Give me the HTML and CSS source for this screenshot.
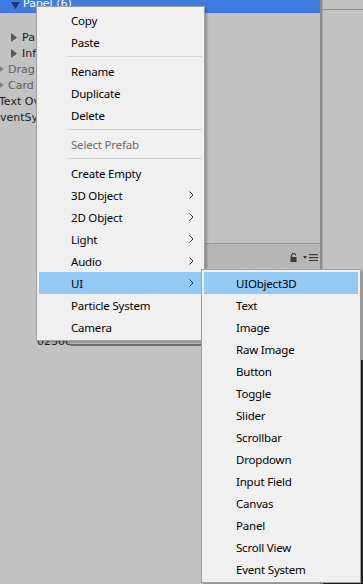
FILE: index.html
```html
<!DOCTYPE html>
<html>

<head>
  <title>Hierarchy context menu</title>
  <link rel="stylesheet" href="styles.css">
</head>

<body>
  <div class="editor">
    <div class="left">
      <div class="hierarchy">
        <div class="tree">
          <div class="row selected">
            <svg class="fold" width="9" height="7" viewBox="0 0 9 7"><polygon points="0,0 9,0 4.5,7" /></svg>
            <span>Panel (6)</span>
          </div>
          <div class="row"></div>
          <div class="row lvl-a">
            <svg class="arrow" width="6" height="9" viewBox="0 0 6 9"><polygon points="0,0 6,4.5 0,9" /></svg>
            <span>Panel</span>
          </div>
          <div class="row lvl-a">
            <svg class="arrow" width="6" height="9" viewBox="0 0 6 9"><polygon points="0,0 6,4.5 0,9" /></svg>
            <span>InfoPanel</span>
          </div>
          <div class="row lvl-b muted">
            <svg class="arrow" width="6" height="8" viewBox="0 0 6 8"><polygon points="0,0 6,4 0,8" /></svg>
            <span>Drag Zone</span>
          </div>
          <div class="row lvl-b muted">
            <svg class="arrow" width="6" height="8" viewBox="0 0 6 8"><polygon points="0,0 6,4 0,8" /></svg>
            <span>Card Slots</span>
          </div>
          <div class="row lvl-c"><span>Text Overlay</span></div>
          <div class="row lvl-d"><span>EventSystem</span></div>
        </div>
      </div>

      <div class="bar-row">
        <div class="bar-gap"></div>
        <div class="toolbar">
          <svg class="lock" width="7" height="9" viewBox="0 0 7 9">
            <path d="M1.5 4 V2.5 A2 2 0 0 1 5.5 2.5" fill="none" stroke="#3a3a3a" stroke-width="1.2" />
            <rect x="0.5" y="4" width="6" height="5" fill="#3a3a3a" />
          </svg>
          <svg class="panel-menu" width="15" height="7" viewBox="0 0 15 7">
            <polygon points="0,2 4,2 2,5" fill="#3a3a3a" />
            <rect x="6" y="0" width="9" height="1.2" fill="#3a3a3a" />
            <rect x="6" y="3" width="9" height="1.2" fill="#3a3a3a" />
            <rect x="6" y="6" width="9" height="1" fill="#3a3a3a" />
          </svg>
        </div>
      </div>

      <div class="lower">
        <div class="tabstrip">
          <span class="tab">02300</span>
          <span class="tabline"></span>
        </div>
      </div>
    </div>

    <div class="divider"></div>

    <div class="right">
      <div class="right-head"></div>
      <div class="right-body"></div>
      <div class="scene-dark"></div>
    </div>
  </div>

  <div class="menu main-menu">
    <div class="item">Copy</div>
    <div class="item">Paste</div>
    <div class="sep"></div>
    <div class="item">Rename</div>
    <div class="item">Duplicate</div>
    <div class="item">Delete</div>
    <div class="sep"></div>
    <div class="item disabled">Select Prefab</div>
    <div class="sep"></div>
    <div class="item">Create Empty</div>
    <div class="item">3D Object<svg class="chev" width="5" height="8" viewBox="0 0 5 8"><polyline points="0.5,0.5 4,4 0.5,7.5" /></svg></div>
    <div class="item">2D Object<svg class="chev" width="5" height="8" viewBox="0 0 5 8"><polyline points="0.5,0.5 4,4 0.5,7.5" /></svg></div>
    <div class="item">Light<svg class="chev" width="5" height="8" viewBox="0 0 5 8"><polyline points="0.5,0.5 4,4 0.5,7.5" /></svg></div>
    <div class="item">Audio<svg class="chev" width="5" height="8" viewBox="0 0 5 8"><polyline points="0.5,0.5 4,4 0.5,7.5" /></svg></div>
    <div class="item active">UI<svg class="chev" width="5" height="8" viewBox="0 0 5 8"><polyline points="0.5,0.5 4,4 0.5,7.5" /></svg></div>
    <div class="item">Particle System</div>
    <div class="item">Camera</div>
  </div>

  <div class="menu sub-menu">
    <div class="item active">UIObject3D</div>
    <div class="item">Text</div>
    <div class="item">Image</div>
    <div class="item">Raw Image</div>
    <div class="item">Button</div>
    <div class="item">Toggle</div>
    <div class="item">Slider</div>
    <div class="item">Scrollbar</div>
    <div class="item">Dropdown</div>
    <div class="item">Input Field</div>
    <div class="item">Canvas</div>
    <div class="item">Panel</div>
    <div class="item">Scroll View</div>
    <div class="item">Event System</div>
  </div>
</body>

</html>
```

FILE: styles.css
```css
body {
  margin: 0;
  background-color: #c2c2c2;
  font-family: "DejaVu Sans", sans-serif;
  font-size: 11px;
  overflow: hidden;
}

.editor {
  display: flex;
  width: 363px;
  height: 584px;
  overflow: hidden;
}

.left {
  width: 320px;
  display: flex;
  flex-direction: column;
  overflow: hidden;
}

/* hierarchy tree */

.hierarchy {
  height: 243px;
  flex-shrink: 0;
  overflow: hidden;
}

.tree {
  margin-top: -3px;
}

.row {
  height: 16px;
  display: flex;
  align-items: center;
  white-space: nowrap;
  color: #1c1c1c;
}

.row.selected {
  background-color: #3d7be0;
  color: #fff;
  padding-left: 11px;
}

.row.selected span {
  margin-top: -4px;
}

.fold {
  fill: #1f3a68;
  margin-right: 3px;
}

.arrow {
  fill: #5a5a5a;
  flex-shrink: 0;
}

.lvl-a {
  padding-left: 11px;
}

.lvl-a .arrow {
  margin-right: 5px;
}

.lvl-b {
  margin-left: -2px;
}

.lvl-b .arrow {
  fill: #808080;
  margin-right: 4px;
}

.muted {
  color: #5e5e5e;
}

.lvl-c {
  margin-left: -1px;
}

.lvl-d {
  margin-left: -7px;
}

/* toolbar under the tree */

.bar-row {
  display: flex;
  height: 25px;
  flex-shrink: 0;
}

.bar-gap {
  width: 150px;
}

.toolbar {
  flex: 1;
  background-color: #b6b6b6;
  border-top: 1px solid #9a9a9a;
  display: flex;
  justify-content: flex-end;
  align-items: center;
  gap: 6px;
  padding-right: 2px;
  padding-top: 3px;
}

.lower {
  flex: 1;
  padding-top: 66px;
}

.tabstrip {
  display: flex;
  align-items: flex-end;
  height: 14px;
}

.tab {
  margin-left: 37px;
  width: 33px;
  line-height: 12px;
  color: #222;
  overflow: hidden;
}

.tabline {
  width: 131px;
  height: 2px;
  margin-bottom: 2px;
  background-color: #6e6e6e;
}

/* right side */

.divider {
  width: 2px;
  background-color: #8a8a8a;
  border-right: 1px solid #ababab;
}

.right {
  flex: 1;
  display: flex;
  flex-direction: column;
}

.right-head {
  height: 9px;
  border-bottom: 1px solid #8e8e8e;
}

.right-body {
  height: 350px;
}

.scene-dark {
  flex: 1;
  background-color: #282828;
}

/* context menus */

.menu {
  position: absolute;
  background-color: #f0f0f0;
  border: 1px solid #a0a0a0;
  padding: 2px;
  box-shadow: 2px 2px 2px rgba(0, 0, 0, 0.25);
  font-family: "Noto Sans", sans-serif;
  font-size: 11.5px;
  letter-spacing: -0.2px;
  color: #000;
}

.main-menu {
  left: 36px;
  top: 6px;
  width: 163px;
}

.sub-menu {
  left: 201px;
  top: 269px;
  width: 154px;
}

.item {
  height: 22px;
  display: flex;
  align-items: center;
  justify-content: space-between;
  padding-left: 32px;
  padding-right: 8px;
  white-space: nowrap;
}

.item.active {
  background-color: #91c9f7;
}

.item.disabled {
  color: #6d6d6d;
}

.sep {
  height: 1px;
  margin: 3px 0 3px 28px;
  background-color: #d5d5d5;
}

.chev {
  fill: none;
  stroke: #333;
  stroke-width: 1;
}
```
